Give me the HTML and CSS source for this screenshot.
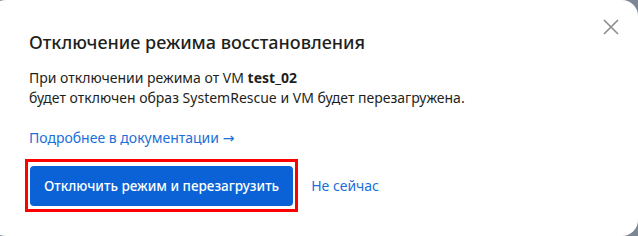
FILE: index.html
```html
<!DOCTYPE html>
<html lang="ru">
<head>
  <meta charset="UTF-8" />
  <title>Отключение режима восстановления</title>
  <link rel="stylesheet" href="styles.css">
</head>
<body>
  <div class="modal">
    <button class="close-btn" aria-label="Закрыть">
      <svg width="16" height="16" viewBox="0 0 16 16">
        <path d="M1 1 L15 15 M15 1 L1 15" stroke="#8c8c8c" stroke-width="1.6" fill="none" />
      </svg>
    </button>

    <h2 class="modal-title">Отключение режима восстановления</h2>

    <p class="modal-text">
      При отключении режима от VM <strong>test_02</strong><br />
      будет отключен образ SystemRescue и VM будет перезагружена.
    </p>

    <a class="doc-link" href="#">Подробнее в документации <span class="arrow">→</span></a>

    <div class="actions">
      <div class="highlight">
        <button class="primary-btn">Отключить режим и перезагрузить</button>
      </div>
      <a class="secondary-link" href="#">Не сейчас</a>
    </div>
  </div>
</body>
</html>
```

FILE: styles.css
```css
:root {
  --backdrop: #7d8794;
  --text-color: #1e1f21;
  --accent-color: #0a62d6;
  --link-color: #1a6fd9;
  --marker: #ff0000;
  --font-family: "Noto Sans", "Open Sans", sans-serif;
}
* {
  margin: 0;
  padding: 0;
  box-sizing: border-box;
  font-family: var(--font-family);
}
html, body {
  height: 100%;
}
body {
  background: var(--backdrop);
  color: var(--text-color);
  overflow: hidden;
}
.modal {
  position: relative;
  margin-left: -10px;
  width: 648px;
  height: 236px;
  background: #ffffff;
  border-radius: 16px;
  padding: 30px 0 0 39px;
}
.close-btn {
  position: absolute;
  top: 19px;
  right: 19px;
  background: none;
  border: none;
  cursor: pointer;
  display: flex;
}
.modal-title {
  font-size: 18px;
  font-weight: 500;
  line-height: 24px;
  margin-bottom: 14px;
}
.modal-text {
  font-size: 14px;
  line-height: 20px;
  margin-bottom: 18px;
}
.modal-text strong {
  font-weight: 700;
}
.doc-link {
  display: inline-block;
  font-size: 14px;
  line-height: 20px;
  color: var(--link-color);
  text-decoration: none;
}
.doc-link .arrow {
  font-family: "DejaVu Sans", sans-serif;
}

/* Buttons */
.actions {
  display: flex;
  align-items: center;
  gap: 13px;
  margin-top: 11px;
  margin-left: -4px;
}
.highlight {
  border: 3px solid var(--marker);
  padding: 4px 2px 3px;
}
.primary-btn {
  display: block;
  height: 40px;
  padding: 0 14px;
  background: var(--accent-color);
  color: #ffffff;
  border: none;
  border-radius: 4px;
  font-size: 13.5px;
  font-weight: 500;
  cursor: pointer;
}
.secondary-link {
  font-size: 14px;
  color: var(--link-color);
  text-decoration: none;
}
```
